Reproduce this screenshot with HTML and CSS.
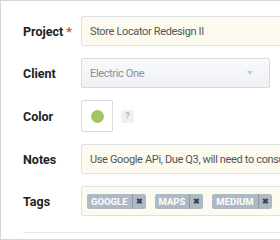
FILE: index.html
```html
<!DOCTYPE html>
<html lang="en">

<head>
	<meta charset="UTF-8">
	<title>Project form</title>
	<link rel="stylesheet" href="styles.css">
</head>

<body>
	<div class="panel">
		<form class="project-form">
			<label class="field-label">Project <span class="req">*</span></label>
			<div class="input input-text">Store Locator Redesign II</div>

			<label class="field-label">Client</label>
			<div class="input input-select">
				<span>Electric One</span>
				<span class="caret"></span>
			</div>

			<label class="field-label">Color</label>
			<div class="color-row">
				<div class="swatch-box"><span class="swatch"></span></div>
				<span class="help">?</span>
			</div>

			<label class="field-label">Notes</label>
			<div class="input input-text">Use Google APi, Due Q3, will need to consult</div>

			<label class="field-label">Tags</label>
			<div class="input input-tags">
				<span class="tag"><span class="tag-name">Google</span><span class="tag-x">&#x2716;</span></span>
				<span class="tag"><span class="tag-name">Maps</span><span class="tag-x">&#x2716;</span></span>
				<span class="tag"><span class="tag-name">Medium</span><span class="tag-x">&#x2716;</span></span>
			</div>
		</form>
		<div class="divider"></div>
	</div>
</body>

</html>
```

FILE: styles.css
```css
body {
	margin: 0;
	font-family: Roboto, 'Liberation Sans', sans-serif;
	background: #fff;
	width: 280px;
	overflow: hidden;
}

.panel {
	width: 257px;
	height: 223px;
	border: 1px solid #d3d7db;
	border-right: none;
	padding: 15px 0 0 22px;
	overflow: hidden;
}

.project-form {
	display: grid;
	grid-template-columns: 58px 220px;
	row-gap: 12px;
	align-items: center;
}

.field-label {
	font-size: 12.5px;
	font-weight: bold;
	color: #222;
}

.req {
	color: #e2452c;
}

.input {
	height: 30px;
	box-sizing: border-box;
	border: 1px solid #dde2e7;
	border-radius: 2px;
	padding: 0 8px;
	display: flex;
	align-items: center;
	font-size: 11px;
	letter-spacing: -0.35px;
	color: #555;
	white-space: nowrap;
	overflow: hidden;
}

.input-text {
	background: #fdfaf0;
}

.input-select {
	width: 189px;
	justify-content: space-between;
	background: linear-gradient(#f8f9fb, #eef1f5);
	color: #8a9096;
	border-color: #d6dce2;
}

.caret {
	width: 0;
	height: 0;
	border-left: 3px solid transparent;
	border-right: 3px solid transparent;
	border-top: 4px solid #c3c9cf;
	margin-right: 8px;
}

.color-row {
	display: flex;
	align-items: center;
	gap: 8px;
}

.swatch-box {
	width: 32px;
	height: 32px;
	box-sizing: border-box;
	border: 1px solid #d6dce2;
	border-radius: 2px;
	display: flex;
	align-items: center;
	justify-content: center;
	background: #fff;
}

.swatch {
	width: 13px;
	height: 13px;
	border-radius: 50%;
	background: #a3c464;
}

.help {
	width: 13px;
	height: 13px;
	background: #eef1f4;
	border-radius: 2px;
	color: #b5bec7;
	font-size: 9px;
	font-weight: bold;
	display: flex;
	align-items: center;
	justify-content: center;
}

.input-tags {
	background: #fdfaf0;
	padding: 0 5px;
	gap: 9px;
}

.tag {
	display: flex;
	height: 15px;
	background: #adbac6;
	border-radius: 2px;
	font-size: 9.5px;
	font-weight: bold;
	letter-spacing: 0;
	text-transform: uppercase;
	line-height: 15px;
}

.tag-name {
	color: #fff;
	padding: 0 4px;
	border-right: 1px solid #8c9aa7;
}

.tag-x {
	color: #3a434c;
	font-size: 8px;
	padding: 0 3px;
}

.divider {
	margin-top: 16px;
	height: 1px;
	background: #e2e6ea;
}
```
